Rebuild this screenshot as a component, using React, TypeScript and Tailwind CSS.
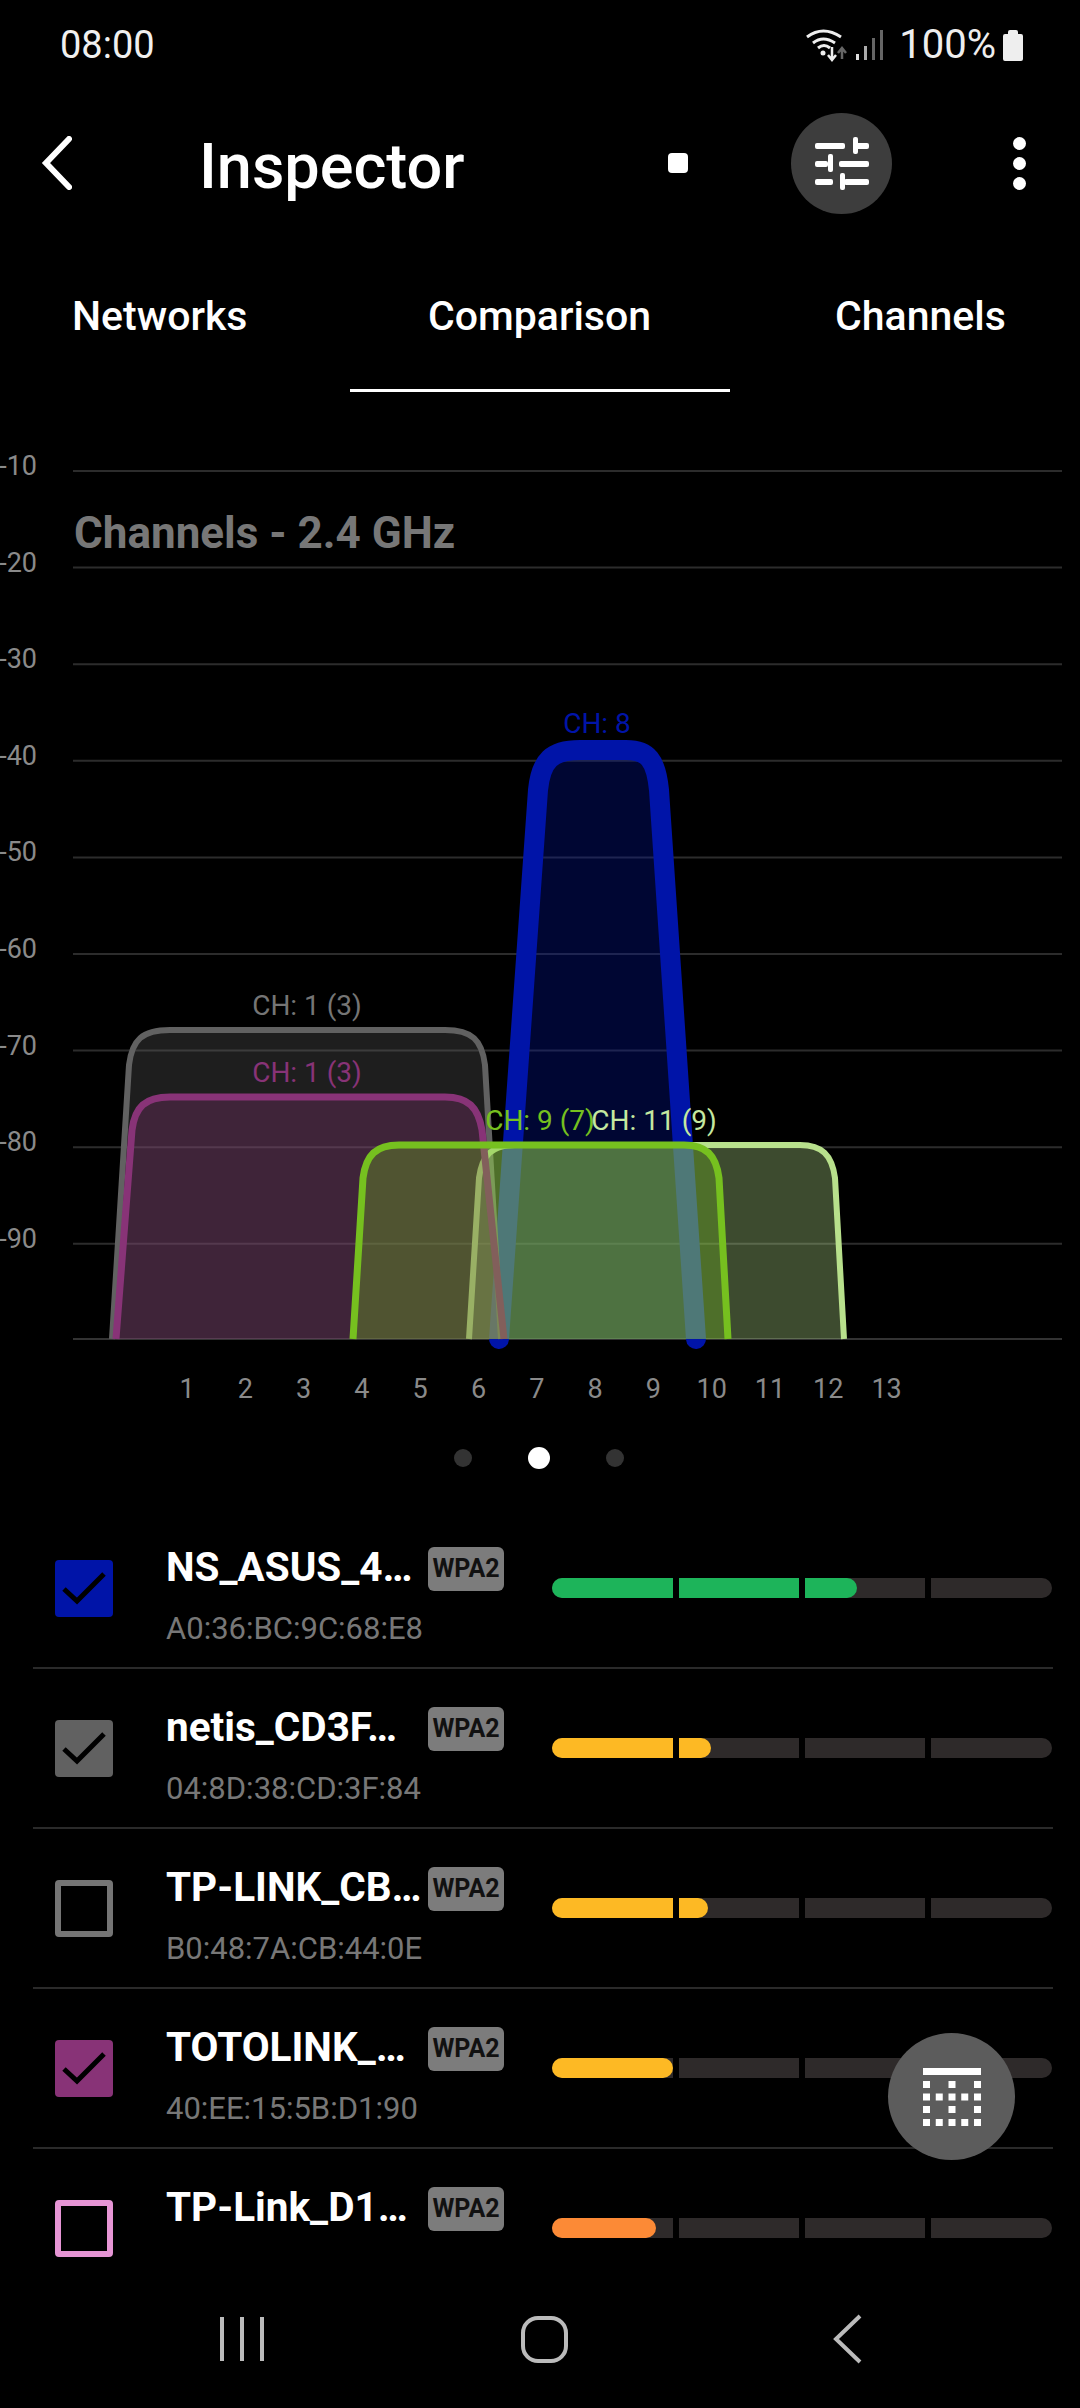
const font = "font-['Roboto',sans-serif]";

const gridLevels = [-10, -20, -30, -40, -50, -60, -70, -80, -90];
const channels = [1, 2, 3, 4, 5, 6, 7, 8, 9, 10, 11, 12, 13];

type Curve = { d: string; stroke: string; fill: string; width: number };

// paint order matters: the green curve sits over everything else
const curves: Curve[] = [
  {
    d: "M499 1339 L538 790 C541 760 552 750 580 750 L626 750 C648 750 656 760 659 790 L696 1339",
    stroke: "#0014a8",
    fill: "#0014a84d",
    width: 20,
  },
  {
    d: "M112 1339 L129 1065 C132 1040 142 1030 170 1030 L445 1030 C472 1030 482 1040 485 1065 L501 1339",
    stroke: "#616161",
    fill: "#61616150",
    width: 6,
  },
  {
    d: "M469 1339 L479 1178 C482 1155 492 1145 515 1145 L800 1145 C822 1145 832 1155 835 1178 L844 1339",
    stroke: "#b8e08c",
    fill: "#b8e08c55",
    width: 6,
  },
  {
    d: "M116 1339 L132 1130 C135 1107 145 1097 170 1097 L445 1097 C468 1097 478 1107 482 1130 L504 1339",
    stroke: "#883377",
    fill: "#88337750",
    width: 7,
  },
  {
    d: "M353 1339 L363 1178 C366 1155 376 1145 399 1145 L684 1145 C706 1145 716 1155 719 1178 L728 1339",
    stroke: "#76c01f",
    fill: "#76c01f50",
    width: 7,
  },
];

const curveLabels = [
  { x: 307, y: 1015, text: "CH: 1 (3)", color: "#757575" },
  { x: 307, y: 1082, text: "CH: 1 (3)", color: "#883377" },
  { x: 597, y: 733, text: "CH: 8", color: "#0014a8" },
  { x: 540, y: 1130, text: "CH: 9 (7)", color: "#76c01f" },
  { x: 654, y: 1130, text: "CH: 11 (9)", color: "#c5e8a0" },
];

type Net = {
  name: string;
  mac: string;
  box: string;
  checked: boolean;
  level: number;
  bar: string;
};

const networks: Net[] = [
  { name: "NS_ASUS_4…", mac: "A0:36:BC:9C:68:E8", box: "#0014a8", checked: true, level: 305, bar: "#1db45a" },
  { name: "netis_CD3F…", mac: "04:8D:38:CD:3F:84", box: "#616161", checked: true, level: 159, bar: "#fdb924" },
  { name: "TP-LINK_CB…", mac: "B0:48:7A:CB:44:0E", box: "#757575", checked: false, level: 156, bar: "#fdb924" },
  { name: "TOTOLINK_…", mac: "40:EE:15:5B:D1:90", box: "#883377", checked: true, level: 121, bar: "#fdb924" },
  { name: "TP-Link_D1…", mac: "", box: "#e695d5", checked: false, level: 104, bar: "#fc8a36" },
];

function SignalBar({ level, color }: { level: number; color: string }) {
  return (
    <div className="relative h-[20px] w-[500px] overflow-hidden rounded-full bg-[#2e2a2a]">
      <div className="h-full rounded-r-full" style={{ width: level, backgroundColor: color }} />
      <div className="absolute inset-0 flex justify-between px-[121px]">
        <div className="h-full w-[6px] bg-black" />
        <div className="h-full w-[6px] bg-black" />
        <div className="h-full w-[6px] bg-black" />
      </div>
    </div>
  );
}

function NetworkRow({ net, last }: { net: Net; last: boolean }) {
  return (
    <div className={`mr-[27px] ml-[33px] flex h-[160px] pl-[22px] ${last ? "" : "border-b-2 border-[#2a2a2a]"}`}>
      <div
        className="mt-[51px] flex h-[57px] w-[58px] shrink-0 items-center justify-center rounded-[4px]"
        style={
          net.checked
            ? { backgroundColor: net.box }
            : { border: `6px solid ${net.box}` }
        }
      >
        {net.checked && (
          <svg width="46" height="36" viewBox="0 0 46 36" fill="none">
            <path d="M3 18 L16 30 L43 3" stroke="#000" strokeWidth="5" />
          </svg>
        )}
      </div>
      <div className="ml-[53px] w-[262px] shrink-0">
        <div className="mt-[32px] h-[52px] text-[40.5px] leading-[52px] font-bold whitespace-nowrap text-white">
          {net.name}
        </div>
        <div className="mt-[16px] text-[31px] leading-[40px] whitespace-nowrap text-[#777]">{net.mac}</div>
      </div>
      <div className="mt-[38px] flex h-[44px] w-[76px] shrink-0 items-center justify-center rounded-[6px] bg-[#7c7c7c] text-[25px] font-bold text-[#111]">
        WPA2
      </div>
      <div className="mt-[69px] ml-[48px]">
        <SignalBar level={net.level} color={net.bar} />
      </div>
    </div>
  );
}

export default function App() {
  return (
    <div className={`relative flex h-[2408px] w-[1080px] flex-col overflow-hidden bg-black text-white ${font}`}>
      {/* status bar */}
      <div className="flex h-[90px] items-center justify-between pr-[56px] pl-[60px]">
        <span className="text-[38px] text-[#f0f0f0]">08:00</span>
        <div className="flex items-center">
          <svg width="44" height="36" viewBox="0 0 44 36" fill="none" className="mr-[6px]">
            <path d="M2 10 Q18 -2 36 10" stroke="#eee" strokeWidth="3" />
            <path d="M8 16 Q18 8 30 16" stroke="#eee" strokeWidth="3" />
            <path d="M13 21 Q19 16 25 21" stroke="#eee" strokeWidth="3" />
            <circle cx="18" cy="26" r="2.5" fill="#eee" />
            <path d="M27 20 V32 M23 28 L27 33 L31 28" stroke="#eee" strokeWidth="2.5" />
            <path d="M37 32 V22 M33 26 L37 21 L41 26" stroke="#666" strokeWidth="2.5" />
          </svg>
          <svg width="30" height="32" viewBox="0 0 30 32" className="mr-[14px]">
            <rect x="1" y="25" width="3" height="6" fill="#ddd" />
            <rect x="9" y="17" width="3" height="14" fill="#aaa" />
            <rect x="17" y="9" width="3" height="22" fill="#666" />
            <rect x="25" y="1" width="3" height="30" fill="#666" />
          </svg>
          <span className="mr-[6px] text-[40px] text-[#eee]">100%</span>
          <svg width="22" height="33" viewBox="0 0 22 33">
            <path d="M6 3 Q6 1 8 1 H14 Q16 1 16 3 V5 H19 Q21 5 21 7 V30 Q21 32 19 32 H3 Q1 32 1 30 V7 Q1 5 3 5 H6 Z" fill="#eee" />
          </svg>
        </div>
      </div>

      {/* toolbar */}
      <div className="flex h-[146px] items-center">
        <svg width="31" height="54" viewBox="0 0 31 54" fill="none" className="ml-[41px] shrink-0">
          <path d="M28 3 L5 27 L28 51" stroke="#fff" strokeWidth="6" strokeLinecap="round" />
        </svg>
        <span className="mt-[6px] ml-[127px] w-[469px] text-[63px] leading-none font-medium">Inspector</span>
        <div className="h-[20px] w-[20px] rounded-[4px] bg-white" />
        <div className="ml-[103px] flex h-[101px] w-[101px] items-center justify-center rounded-full bg-[#3d3d3d]">
          <svg width="54" height="53" viewBox="0 0 54 53" fill="#fff">
            <rect x="0" y="6" width="30" height="6" rx="2" />
            <rect x="38" y="0" width="5" height="17" rx="2" />
            <rect x="41" y="6" width="13" height="6" rx="2" />
            <rect x="0" y="24" width="13" height="6" rx="2" />
            <rect x="13" y="17" width="5" height="18" rx="2" />
            <rect x="24" y="24" width="30" height="6" rx="2" />
            <rect x="0" y="42" width="18" height="6" rx="2" />
            <rect x="25" y="36" width="5" height="17" rx="2" />
            <rect x="29" y="42" width="25" height="6" rx="2" />
          </svg>
        </div>
        <div className="ml-[121px] flex flex-col gap-[7px]">
          <div className="h-[13px] w-[13px] rounded-full bg-white" />
          <div className="h-[13px] w-[13px] rounded-full bg-white" />
          <div className="h-[13px] w-[13px] rounded-full bg-white" />
        </div>
      </div>

      {/* tabs */}
      <div className="relative flex h-[156px] items-start pt-[56px] text-[41px] leading-[48px] font-medium">
        <span className="ml-[72px] w-[356px]">Networks</span>
        <span className="w-[407px]">Comparison</span>
        <span>Channels</span>
        <div className="absolute top-[153px] left-[350px] h-[3px] w-[380px] bg-white" />
      </div>

      {/* chart, svg coords are page coords */}
      <div className="h-[1046px] shrink-0">
        <svg width="1080" height="1046" viewBox="0 392 1080 1046" className="block">
          {gridLevels.map((lv, i) => {
            const y = 471 + i * 96.6;
            return (
              <g key={lv}>
                <line x1="73" x2="1062" y1={y} y2={y} stroke="#2c2c2c" strokeWidth="2" />
                <text x="37" y={y + 4} textAnchor="end" fontSize="27" fill="#8a8a8a">
                  {lv}
                </text>
              </g>
            );
          })}
          <line x1="73" x2="1062" y1="1339" y2="1339" stroke="#333" strokeWidth="2" />
          <text x="74" y="548" fontSize="44" fontWeight="700" fill="#777">
            Channels - 2.4 GHz
          </text>
          {curves.map((c) => (
            <path
              key={c.stroke}
              d={c.d}
              fill={c.fill}
              stroke={c.stroke}
              strokeWidth={c.width}
              strokeLinecap={c.width > 10 ? "round" : "butt"}
            />
          ))}
          {curveLabels.map((l) => (
            <text key={l.text + l.color} x={l.x} y={l.y} textAnchor="middle" fontSize="28" fill={l.color}>
              {l.text}
            </text>
          ))}
          {channels.map((ch, i) => (
            <text key={ch} x={187 + i * 58.3} y="1398" textAnchor="middle" fontSize="27" fill="#8a8a8a">
              {ch}
            </text>
          ))}
        </svg>
      </div>

      {/* pager dots */}
      <div className="flex h-[40px] items-center justify-center gap-[56px] pr-[2px]">
        <div className="h-[18px] w-[18px] rounded-full bg-[#333]" />
        <div className="h-[22px] w-[22px] rounded-full bg-white" />
        <div className="h-[18px] w-[18px] rounded-full bg-[#333]" />
      </div>

      {/* network list */}
      <div className="mt-[31px] flex flex-col">
        {networks.map((n, i) => (
          <NetworkRow key={n.name} net={n} last={i === networks.length - 1} />
        ))}
      </div>

      {/* floating button */}
      <div className="absolute top-[2033px] left-[888px] flex h-[127px] w-[127px] items-center justify-center rounded-full bg-[#5c5c5c]">
        <svg width="58" height="58" viewBox="0 0 58 58" fill="#fff">
          <rect x="0" y="0" width="58" height="7" />
          {[13, 38].map((y) =>
            [0, 25.5, 51].map((x) => <rect key={`${x}-${y}`} x={x} y={y} width="7" height="7" />),
          )}
          {[25.5, 51].map((y) =>
            [0, 12.75, 25.5, 38.25, 51].map((x) => <rect key={`${x}-${y}`} x={x} y={y} width="7" height="7" />),
          )}
        </svg>
      </div>

      {/* nav bar */}
      <div className="absolute bottom-0 left-0 h-[108px] w-full bg-black">
        <svg width="1080" height="108" viewBox="0 2300 1080 108" fill="none" stroke="#bbb" strokeWidth="4">
          <path d="M222 2317 V2361 M242 2317 V2361 M262 2317 V2361" />
          <rect x="523" y="2318" width="43" height="43" rx="15" />
          <path d="M860 2316 L836 2339 L860 2362" />
        </svg>
      </div>
    </div>
  );
}
